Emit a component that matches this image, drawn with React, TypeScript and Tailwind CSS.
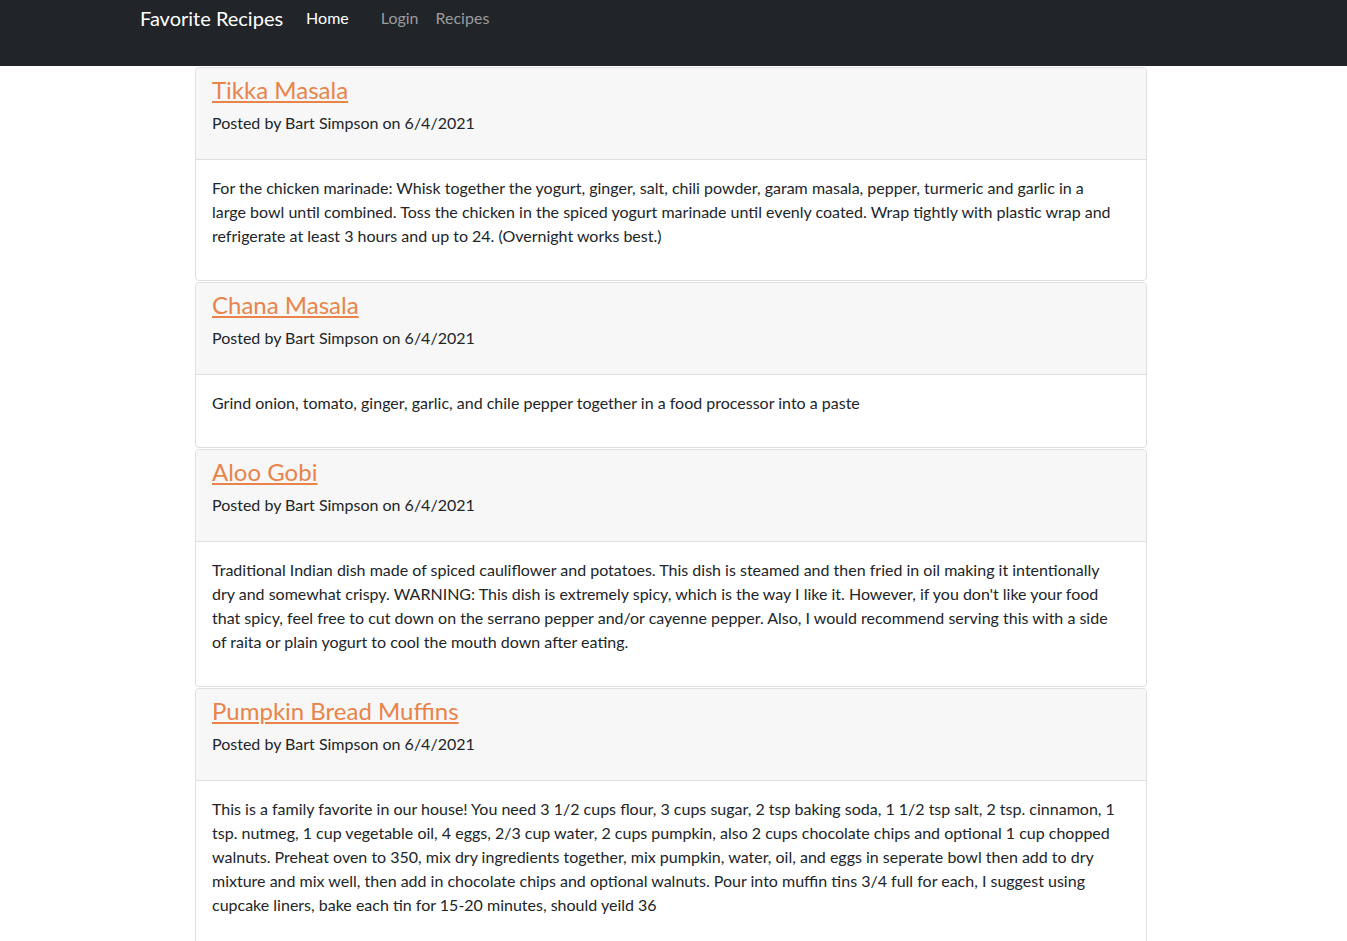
import React from "react";

const recipes = [
  {
    title: "Tikka Masala",
    lines: [
      "For the chicken marinade: Whisk together the yogurt, ginger, salt, chili powder, garam masala, pepper, turmeric and garlic in a",
      "large bowl until combined. Toss the chicken in the spiced yogurt marinade until evenly coated. Wrap tightly with plastic wrap and",
      "refrigerate at least 3 hours and up to 24. (Overnight works best.)",
    ],
  },
  {
    title: "Chana Masala",
    lines: ["Grind onion, tomato, ginger, garlic, and chile pepper together in a food processor into a paste"],
  },
  {
    title: "Aloo Gobi",
    lines: [
      "Traditional Indian dish made of spiced cauliflower and potatoes. This dish is steamed and then fried in oil making it intentionally",
      "dry and somewhat crispy. WARNING: This dish is extremely spicy, which is the way I like it. However, if you don't like your food",
      "that spicy, feel free to cut down on the serrano pepper and/or cayenne pepper. Also, I would recommend serving this with a side",
      "of raita or plain yogurt to cool the mouth down after eating.",
    ],
  },
  {
    title: "Pumpkin Bread Muffins",
    lines: [
      "This is a family favorite in our house! You need 3 1/2 cups flour, 3 cups sugar, 2 tsp baking soda, 1 1/2 tsp salt, 2 tsp. cinnamon, 1",
      "tsp. nutmeg, 1 cup vegetable oil, 4 eggs, 2/3 cup water, 2 cups pumpkin, also 2 cups chocolate chips and optional 1 cup chopped",
      "walnuts. Preheat oven to 350, mix dry ingredients together, mix pumpkin, water, oil, and eggs in seperate bowl then add to dry",
      "mixture and mix well, then add in chocolate chips and optional walnuts. Pour into muffin tins 3/4 full for each, I suggest using",
      "cupcake liners, bake each tin for 15-20 minutes, should yeild 36",
    ],
  },
];

export default function App() {
  return (
    <div className="min-h-[941px] bg-white text-[#212529]" style={{ fontFamily: '"Segoe UI", Lato, "Noto Sans", sans-serif' }}>
      <nav className="h-[66px] bg-[#212529] flex items-start pl-[140px] pt-[4px]">
        <a className="text-white text-[20px] leading-[28px] mr-[23px]">Favorite Recipes</a>
        <div className="flex text-[16px] leading-[26px] pt-[1px]">
          <a className="text-white mr-[32px]">Home</a>
          <a className="text-[#9a9b9d] mr-[17px]">Login</a>
          <a className="text-[#9a9b9d]">Recipes</a>
        </div>
      </nav>
      <div className="pl-[195px] pt-[1px]">
        {recipes.map((r) => (
          <div key={r.title} className="w-[952px] border border-[#dfdfdf] rounded-[4px] mb-[1px] bg-white">
            <div className="bg-[#f7f7f7] border-b border-[#dfdfdf] rounded-t-[4px] px-[16px] pt-[7px] pb-[24px]">
              <h3 className="text-[24px] leading-[29px] m-0">
                <a className="text-[#e8844a] underline decoration-[2px] underline-offset-[2px]">{r.title}</a>
              </h3>
              <p className="text-[16px] leading-[24px] mt-[7px]">Posted by Bart Simpson on 6/4/2021</p>
            </div>
            <div className="px-[16px] pt-[16px] pb-[32px] text-[16px] leading-[24px]">
              {r.lines.map((l, i) => (
                <div key={i} className="whitespace-nowrap">{l}</div>
              ))}
            </div>
          </div>
        ))}
      </div>
    </div>
  );
}
